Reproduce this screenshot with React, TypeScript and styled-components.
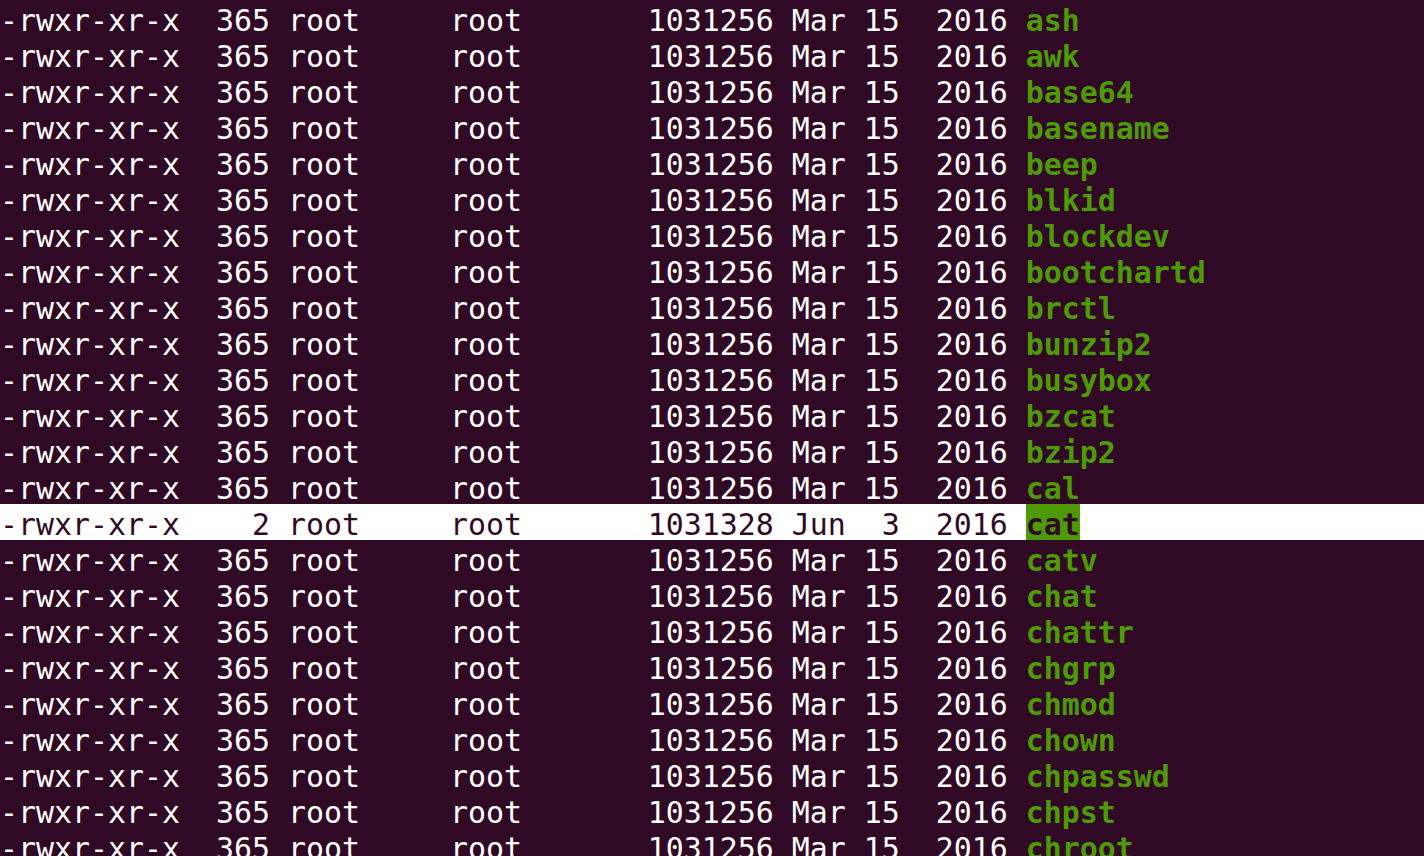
import React from "react";
import styled, { createGlobalStyle } from "styled-components";

const GlobalStyle = createGlobalStyle`
  html, body {
    margin: 0;
    padding: 0;
    background: #300a24;
    overflow: hidden;
  }
`;

const Terminal = styled.div`
  width: 1424px;
  height: 856px;
  overflow: hidden;
  background: #300a24;
  color: #ffffff;
  font-family: "DejaVu Sans Mono", "Liberation Mono", monospace;
  font-size: 29.9px;
  display: flex;
  flex-direction: column;
`;

const Line = styled.div<{ $selected?: boolean }>`
  flex: 0 0 36px;
  height: 36px;
  box-sizing: border-box;
  padding-top: 5px;
  line-height: 31px;
  white-space: pre;
  background: ${(p) => (p.$selected ? "#ffffff" : "transparent")};
  color: ${(p) => (p.$selected ? "#300a24" : "#ffffff")};
`;

const FileName = styled.span<{ $selected?: boolean }>`
  display: inline-block;
  vertical-align: top;
  margin-top: -5px;
  height: 36px;
  padding-top: 5px;
  box-sizing: border-box;
  font-weight: bold;
  color: ${(p) => (p.$selected ? "#300a24" : "#4e9a06")};
  background: ${(p) => (p.$selected ? "#4e9a06" : "transparent")};
`;

type Entry = { links: string; size: string; month: string; day: string; name: string; selected?: boolean };

const names = [
  "ash", "awk", "base64", "basename", "beep", "blkid", "blockdev", "bootchartd",
  "brctl", "bunzip2", "busybox", "bzcat", "bzip2", "cal", "cat", "catv", "chat",
  "chattr", "chgrp", "chmod", "chown", "chpasswd", "chpst", "chroot",
];

const entries: Entry[] = names.map((name) =>
  name === "cat"
    ? { links: "  2", size: "1031328", month: "Jun", day: " 3", name, selected: true }
    : { links: "365", size: "1031256", month: "Mar", day: "15", name }
);

export default function App() {
  return (
    <>
      <GlobalStyle />
      <Terminal>
        {entries.map((e, i) => (
          <Line key={i} $selected={e.selected}>
            {`-rwxr-xr-x  ${e.links} root     root       ${e.size} ${e.month} ${e.day}  2016 `}
            <FileName $selected={e.selected}>{e.name}</FileName>
          </Line>
        ))}
      </Terminal>
    </>
  );
}
